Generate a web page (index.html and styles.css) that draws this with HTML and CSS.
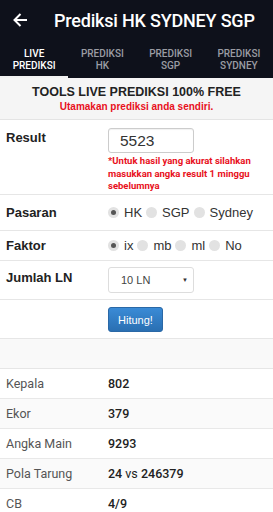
FILE: index.html
```html
<!DOCTYPE html>
<html lang="id">
<head>
  <meta charset="UTF-8">
  <meta name="viewport" content="width=device-width, initial-scale=1.0">
  <title>Prediksi HK SYDNEY SGP</title>
  <link rel="stylesheet" href="styles.css">
</head>
<body>
  <div class="app-header">
    <div class="toolbar">
      <svg class="back" width="16" height="16" viewBox="0 0 16 16">
        <path d="M15 8H2.5M8.5 2L2.5 8l6 6" fill="none" stroke="#fff" stroke-width="2"/>
      </svg>
      <h1>Prediksi HK SYDNEY SGP</h1>
    </div>
    <div class="tabs">
      <div class="tab active">LIVE<br>PREDIKSI</div>
      <div class="tab">PREDIKSI<br>HK</div>
      <div class="tab">PREDIKSI<br>SGP</div>
      <div class="tab">PREDIKSI<br>SYDNEY</div>
    </div>
  </div>

  <div class="intro">
    <h2>TOOLS LIVE PREDIKSI 100% FREE</h2>
    <p>Utamakan prediksi anda sendiri.</p>
  </div>

  <div class="form-row row-result">
    <div class="label">Result</div>
    <div class="field">
      <div class="input">5523</div>
      <div class="note">*Untuk hasil yang akurat silahkan<br>masukkan angka result 1 minggu<br>sebelumnya</div>
    </div>
  </div>

  <div class="form-row row-pasaran">
    <div class="label">Pasaran</div>
    <div class="field radios">
      <span class="radio checked"></span>HK
      <span class="radio"></span>SGP
      <span class="radio"></span>Sydney
    </div>
  </div>

  <div class="form-row row-faktor">
    <div class="label">Faktor</div>
    <div class="field radios">
      <span class="radio checked"></span>ix
      <span class="radio"></span>mb
      <span class="radio"></span>ml
      <span class="radio"></span>No
    </div>
  </div>

  <div class="form-row row-jumlah">
    <div class="label">Jumlah LN</div>
    <div class="field">
      <div class="select">10 LN <span class="caret">▼</span></div>
    </div>
  </div>

  <div class="form-row row-button">
    <div class="label"></div>
    <div class="field">
      <button class="btn">Hitung!</button>
    </div>
  </div>

  <div class="spacer"></div>

  <div class="results">
    <div class="res-row"><span class="res-label">Kepala</span><b>802</b></div>
    <div class="res-row"><span class="res-label">Ekor</span><b>379</b></div>
    <div class="res-row"><span class="res-label">Angka Main</span><b>9293</b></div>
    <div class="res-row"><span class="res-label">Pola Tarung</span><span><b>24</b> vs <b>246379</b></span></div>
    <div class="res-row"><span class="res-label">CB</span><b>4/9</b></div>
  </div>
</body>
</html>
```

FILE: styles.css
```css
* {
  margin: 0;
  padding: 0;
  box-sizing: border-box;
}

body {
  font-family: "Liberation Sans", Arial, sans-serif;
  background-color: #fff;
  color: #222;
  width: 273px;
  overflow: hidden;
}

.app-header {
  background-color: #0e111b;
  color: #fff;
}

.toolbar {
  display: flex;
  align-items: center;
  height: 40px;
  padding-left: 12px;
}

.back {
  margin-right: 26px;
}

.toolbar h1 {
  font-family: Roboto, sans-serif;
  font-size: 18px;
  font-weight: 500;
  letter-spacing: -0.2px;
}

.tabs {
  display: flex;
  height: 38px;
}

.tab {
  flex: 1;
  text-align: center;
  font-family: Roboto, sans-serif;
  font-size: 10px;
  font-weight: 500;
  line-height: 12px;
  padding-top: 8px;
  color: #9a9ca3;
}

.tab.active {
  color: #fff;
  border-bottom: 2px solid #f2f2f2;
}

.intro {
  background-color: #f5f5f5;
  border-bottom: 1px solid #e4e4e4;
  text-align: center;
  height: 42px;
  padding-top: 6px;
}

.intro h2 {
  font-size: 12.5px;
  font-weight: bold;
  color: #222;
  line-height: 16px;
}

.intro p {
  font-size: 10px;
  font-weight: bold;
  color: #e8101c;
  line-height: 14px;
}

.form-row {
  display: flex;
  border-bottom: 1px solid #e6e6e6;
}

.form-row .label {
  width: 108px;
  padding-left: 6px;
  font-size: 13px;
  font-weight: bold;
  color: #222;
}

.form-row .field {
  flex: 1;
}

.row-result {
  height: 75px;
  padding-top: 8px;
}

.row-result .label {
  padding-top: 2px;
}

.input {
  width: 86px;
  height: 25px;
  border: 1px solid #ccc;
  border-radius: 3px;
  font-size: 15.5px;
  line-height: 23px;
  padding-left: 11px;
  color: #333;
  box-shadow: inset 0 1px 1px rgba(0,0,0,0.06);
}

.note {
  font-family: Roboto, sans-serif;
  font-size: 9.5px;
  font-weight: bold;
  color: #e8101c;
  line-height: 12.5px;
  margin-top: 2px;
  white-space: nowrap;
}

.row-pasaran,
.row-faktor {
  align-items: center;
}

.row-pasaran {
  height: 36px;
}

.row-faktor {
  height: 30px;
}

.radios {
  display: flex;
  align-items: center;
  font-size: 13px;
  color: #333;
}

.radio {
  width: 11px;
  height: 11px;
  border-radius: 50%;
  background-color: #e2e2e2;
  margin-right: 5px;
  margin-left: 4px;
  position: relative;
}

.radio:first-child {
  margin-left: 0;
}

.radio.checked::after {
  content: '';
  position: absolute;
  left: 3px;
  top: 3px;
  width: 5px;
  height: 5px;
  border-radius: 50%;
  background-color: #555;
}

.row-jumlah {
  height: 39px;
  padding-top: 6px;
}

.row-jumlah .label {
  padding-top: 3px;
}

.select {
  width: 86px;
  height: 26px;
  border: 1px solid #ddd;
  border-radius: 3px;
  font-size: 11px;
  line-height: 24px;
  padding-left: 12px;
  color: #444;
  display: flex;
  justify-content: space-between;
}

.caret {
  font-size: 6px;
  padding-right: 5px;
  color: #333;
}

.row-button {
  height: 39px;
  padding-top: 7px;
}

.btn {
  width: 55px;
  height: 25px;
  background-color: #3079c0;
  background-image: linear-gradient(#3a8bd6, #2a6fb2);
  color: #fff;
  border: 1px solid #2a68a6;
  border-radius: 3px;
  font-family: "Liberation Sans", Arial, sans-serif;
  font-size: 11px;
}

.spacer {
  height: 30px;
  background-color: #f9f9f9;
  border-bottom: 1px solid #e6e6e6;
}

.results {
  font-family: Roboto, sans-serif;
  font-size: 12.5px;
}

.res-row {
  display: flex;
  align-items: center;
  height: 30px;
  border-bottom: 1px solid #e8e8e8;
  color: #222;
}

.res-row:nth-child(even) {
  background-color: #fafafa;
}

.res-label {
  width: 108px;
  padding-left: 6px;
  color: #555;
}

.res-row b {
  font-weight: 500;
}
```
